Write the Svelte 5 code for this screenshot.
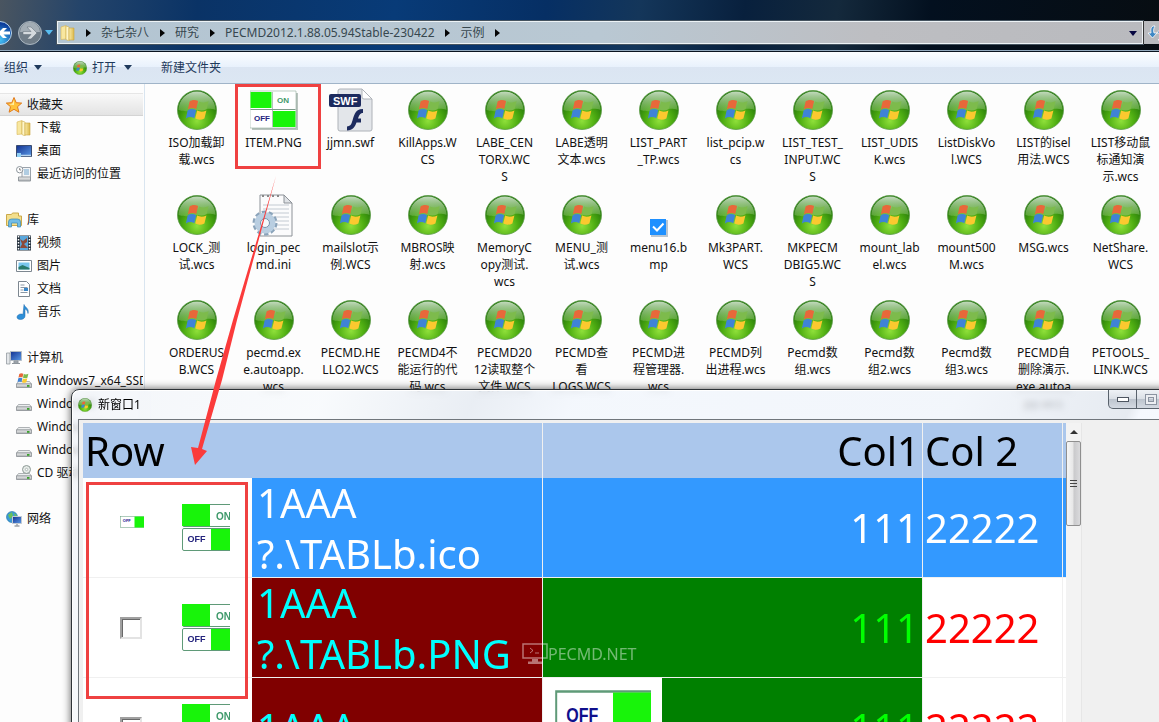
<script>
  const crumbs = ['杂七杂八', '研究', 'PECMD2012.1.88.05.94Stable-230422', '示例'];

  const groups = [
    {
      name: '收藏夹',
      icon: 'star',
      active: true,
      items: [
        { name: '下载', icon: 'folder' },
        { name: '桌面', icon: 'desktop' },
        { name: '最近访问的位置', icon: 'recent' },
      ],
    },
    {
      name: '库',
      icon: 'library',
      items: [
        { name: '视频', icon: 'video' },
        { name: '图片', icon: 'picture' },
        { name: '文档', icon: 'document' },
        { name: '音乐', icon: 'music' },
      ],
    },
    {
      name: '计算机',
      icon: 'computer',
      items: [
        { name: 'Windows7_x64_SSD', icon: 'system' },
        { name: 'Windows8', icon: 'drive' },
        { name: 'Windows10', icon: 'drive' },
        { name: 'Windows11', icon: 'drive' },
        { name: 'CD 驱动器', icon: 'cd' },
      ],
    },
    { name: '网络', icon: 'network', items: [] },
  ];

  // One entry per file, "|" marks a line break in the label.
  const files = [
    'ISO加载卸|载.wcs', 'ITEM.PNG', 'jjmn.swf', 'KillApps.W|CS', 'LABE_CEN|TORX.WC|S',
    'LABE透明|文本.wcs', 'LIST_PART|_TP.wcs', 'list_pcip.w|cs', 'LIST_TEST_|INPUT.WC|S',
    'LIST_UDIS|K.wcs', 'ListDiskVo|l.WCS', 'LIST的isel|用法.WCS', 'LIST移动鼠|标通知演|示.wcs',
    'LOCK_测|试.wcs', 'login_pec|md.ini', 'mailslot示|例.WCS', 'MBROS映|射.wcs', 'MemoryC|opy测试.|wcs',
    'MENU_测|试.wcs', 'menu16.b|mp', 'Mk3PART.|WCS', 'MKPECM|DBIG5.WC|S', 'mount_lab|el.wcs',
    'mount500|M.wcs', 'MSG.wcs', 'NetShare.|WCS',
    'ORDERUS|B.WCS', 'pecmd.ex|e.autoapp.|wcs', 'PECMD.HE|LLO2.WCS', 'PECMD4不|能运行的代|码.wcs',
    'PECMD20|12读取整个|文件.WCS', 'PECMD查|看|LOGS.WCS', 'PECMD进|程管理器.|wcs', 'PECMD列|出进程.wcs',
    'Pecmd数|组.wcs', 'Pecmd数|组2.wcs', 'Pecmd数|组3.wcs', 'PECMD自|删除演示.|exe.autoa|pp.wcs',
    'PETOOLS_|LINK.WCS',
  ].map((label) => ({
    label: label.split('|').join('\n'),
    kind: label.endsWith('.PNG') ? 'png'
      : label.endsWith('.swf') ? 'swf'
      : label.endsWith('.ini') ? 'ini'
      : label.startsWith('menu16') ? 'bmp'
      : 'wcs',
  }));

  const rows = [
    { text: '1AAA\n?.\\TABLb.ico', mini: true, tone: 'selected' },
    { text: '1AAA\n?.\\TABLb.PNG', tone: 'dark' },
    { text: '1AAA', tone: 'dark', preview: true },
  ];
</script>

<!-- shared gradients -->
<svg class="defs" aria-hidden="true">
  <defs>
    <radialGradient id="ball" cx="50%" cy="78%" r="66%">
      <stop offset="0" stop-color="#8fe03a" />
      <stop offset="0.5" stop-color="#4fae12" />
      <stop offset="1" stop-color="#1f7208" />
    </radialGradient>
    <linearGradient id="gloss" x1="0" y1="0" x2="0" y2="1">
      <stop offset="0" stop-color="#d5e6d2" stop-opacity="0.9" />
      <stop offset="1" stop-color="#9ccf7c" stop-opacity="0.35" />
    </linearGradient>
    <linearGradient id="gold" x1="0" y1="0" x2="1" y2="0">
      <stop offset="0" stop-color="#f9e9a4" />
      <stop offset="1" stop-color="#dcb94c" />
    </linearGradient>
    <linearGradient id="screen" x1="0" y1="0" x2="1" y2="1">
      <stop offset="0" stop-color="#12308f" />
      <stop offset="1" stop-color="#5b9be8" />
    </linearGradient>
    <linearGradient id="metal" x1="0" y1="0" x2="0" y2="1">
      <stop offset="0" stop-color="#f4f4f4" />
      <stop offset="1" stop-color="#a9adb0" />
    </linearGradient>
    <radialGradient id="blueball" cx="50%" cy="80%" r="70%">
      <stop offset="0" stop-color="#46c3f5" />
      <stop offset="1" stop-color="#0c3d9c" />
    </radialGradient>
  </defs>
</svg>

{#snippet flag()}
  <path d="M12 11.500c2.500-2 5.500-2 8.500-.5l-1.800 8c-2.700-1.500-5.700-1.500-8.400.3z" fill="#e8683a" />
  <path d="M21.500 11.500c3 1.500 6 1.300 9.500-.5l-2 8.200c-3.300 1.600-6.300 1.600-9.300.2z" fill="#7dbb4c" />
  <path d="M10 20.500c2.700-1.800 5.700-1.800 8.500-.3l-1.800 8c-2.800-1.500-5.700-1.500-8.400.3z" fill="#3f83d6" />
  <path d="M19.500 20.600c3 1.400 6 1.400 9.300-.2l-2 8c-3.300 1.700-6.200 1.700-9.100.2z" fill="#fbc92f" />
{/snippet}

{#snippet ball(size)}
  <svg width={size} height={size} viewBox="0 0 40 40" aria-hidden="true">
    <circle cx="20" cy="20" r="19.500" fill="url(#ball)" stroke="#5a9a46" stroke-width="0.800" />
    <path d="M1.500 20a18.500 18.500 0 0 1 37 0c-10-4-25 4-37 0z" fill="url(#gloss)" />
    <g transform="translate(.6 0)">{@render flag()}</g>
  </svg>
{/snippet}

{#snippet toggles(size)}
  <svg width={size} height={size} viewBox="0 0 48 48" aria-hidden="true">
    <rect x="0.500" y="0.500" width="56" height="22" rx="1.500" fill="#fff" stroke="#5f9a78" />
    <path d="M0 0h28v22H0z" fill="#18f40a" />
    <text x="34" y="15.500" class="on">ON</text>
    <rect x="0.500" y="24.500" width="56" height="22" rx="1.500" fill="#fff" stroke="#5f9a78" />
    <path d="M29 25h19v21H29z" fill="#18f40a" />
    <text x="5.500" y="38" class="off">OFF</text>
  </svg>
{/snippet}

{#snippet offSwitch(width, height)}
  <svg {width} {height} viewBox="0 0 24 12" preserveAspectRatio="none" aria-hidden="true">
    <rect x="0.300" y="0.300" width="24" height="11.400" fill="#fff" stroke="#5f9a78" stroke-width="0.500" />
    <path d="M14.500 .5H24v11h-9.500z" fill="#18f40a" />
    <text x="2.800" y="6.400" class="off-small">OFF</text>
  </svg>
{/snippet}

{#snippet fileIcon(kind)}
  {#if kind === 'wcs'}
    {@render ball(40)}
  {:else if kind === 'png'}
    <svg width="48" height="40" viewBox="0 0 48 40" aria-hidden="true">
      <path d="M2 3h46v37H2z" fill="#b9c4be" />
      <path d="M0 1h46v37H0z" fill="#fff" stroke="#7d9c8b" stroke-width="0.500" />
      <path d="M.5 2h21v16H.5zM23 21h22.500v16H23z" fill="#18f40a" />
      <path d="M.5 19.500h45" stroke="#7d9c8b" />
      <path d="M22.500 2v35" stroke="#7d9c8b" stroke-width="0.600" />
      <text x="27" y="13" class="on thumb">ON</text>
      <text x="4" y="31" class="off thumb">OFF</text>
    </svg>
  {:else if kind === 'swf'}
    <svg width="44" height="44" viewBox="0 0 44 44" aria-hidden="true">
      <path d="M11 1h22l10 10v30a2 2 0 0 1-2 2H11a2 2 0 0 1-2-2V3a2 2 0 0 1 2-2z" fill="#e3e6ea" stroke="#aeb2b8" />
      <path d="M33 1v8a2 2 0 0 0 2 2h8z" fill="#fff" stroke="#aeb2b8" />
      <rect x="0" y="6" width="32" height="13" rx="2" fill="#1d2b5e" />
      <text x="4" y="16.500" class="swf">SWF</text>
      <path d="M34 21c-9 0-9 8-11 13-1 3-2 4-5 4.500v4c6 0 8-4 9.500-8h4.500v-4h-3c1-3 2-5.500 5-5.500z" fill="#1d2b5e" />
    </svg>
  {:else if kind === 'ini'}
    <svg width="44" height="44" viewBox="0 0 44 44" aria-hidden="true">
      <path d="M8 2h24l8 8v33H8z" fill="#fbfbfc" stroke="#8d9298" />
      <path d="M32 2v8h8z" fill="#dfe2e6" stroke="#8d9298" />
      <path d="M10 3h20" stroke="#888" stroke-width="2" stroke-dasharray="2 3" />
      <path d="M11 12h26M11 16h26M11 20h26M11 24h26M11 28h26M11 32h26M11 36h26" stroke="#c3cad2" />
      <circle cx="13" cy="30" r="11" fill="none" stroke="#8aa3ba" stroke-width="3" stroke-dasharray="4.300 2.600" />
      <circle cx="13" cy="30" r="7.500" fill="none" stroke="#b9cee1" stroke-width="6" />
      <circle cx="13" cy="30" r="4.500" fill="#f4f8fb" stroke="#7591ac" />
    </svg>
  {:else}
    <svg width="18" height="18" viewBox="0 0 18 18" aria-hidden="true">
      <path d="M1 1h17v17H1z" fill="#b9c6d2" />
      <path d="M0 0h16v16H0z" fill="#1e90ff" />
      <path d="M3 7.500l4 4 6.500-7" fill="none" stroke="#fff" stroke-width="2" />
    </svg>
  {/if}
{/snippet}

{#snippet navIcon(kind)}
  <svg width="16" height="16" viewBox="0 0 16 16" aria-hidden="true">
    {#if kind === 'star'}
      <path d="M8 .5l2.200 5.200 5.500.4-4.200 3.600 1.400 5.500L8 12.300l-4.900 2.900 1.400-5.500L.3 6.100l5.500-.4z" fill="#ffc33a" stroke="#e07a1c" />
      <path d="M8 3v5L3 7.500l3.500-1z" fill="#fff0a8" />
    {:else if kind === 'folder'}
      <path d="M1 2l5-1.500V14l-5 .5z" fill="#f8e7a0" stroke="#d6b656" stroke-width="0.600" />
      <path d="M6 1l3 1v14l-3-1.500z" fill="#fff6ca" stroke="#cfae4c" stroke-width="0.600" />
      <path d="M9 3h5v12H9z" fill="url(#gold)" stroke="#c9a640" stroke-width="0.600" />
    {:else if kind === 'desktop'}
      <path d="M.5 2.500h15v11H.5z" fill="url(#screen)" stroke="#3a4c70" />
      <path d="M1 12.500h14" stroke="#b9d5ef" stroke-width="1.500" />
      <path d="M1 10h4v4H1z" fill="#8fd0f5" />
    {:else if kind === 'recent'}
      <path d="M6 1.500h8.500v10H6z" fill="#f3f5f7" stroke="#9aa2aa" />
      <path d="M8 4h5M8 6h5M8 8h5" stroke="#6fa4cc" />
      <path d="M2.500 11h12v4h-12z" fill="url(#metal)" stroke="#93999e" />
      <circle cx="3.700" cy="3.700" r="3.200" fill="#fff" stroke="#8d959c" />
      <path d="M3.700 2v2h1.500" fill="none" stroke="#555" stroke-width="0.700" />
    {:else if kind === 'library'}
      <path d="M.5 2.500h5l1-1.500h6v3h3v9.500H.5z" fill="#f3df8d" stroke="#cba94a" />
      <path d="M2.500 15V10a3 3 0 0 1 3-3h6a3 3 0 0 1 3 3v5h-3v-4h-6v4z" fill="#72bde6" stroke="#3b88b5" stroke-width="0.700" />
    {:else if kind === 'video'}
      <path d="M1 .5h14v15H1z" fill="#27333f" />
      <path d="M4 1h8v14H4z" fill="#5aa7dc" />
      <path d="M4 4l3 2 4-3v4l-3 2 4 4H4l2-4z" fill="#8d4a3a" />
      <path d="M2.500 1v14M13.500 1v14" stroke="#fff" stroke-width="1.500" stroke-dasharray="1.500 1.500" />
    {:else if kind === 'picture'}
      <path d="M.5 2.500h15v11H.5z" fill="#fff" stroke="#7d8790" />
      <path d="M2.500 4.500h11v7h-11z" fill="#79c6ee" />
      <path d="M2.500 9l4-2 7 3v1.500h-11z" fill="#287a6c" />
    {:else if kind === 'document'}
      <path d="M2.500.5h8l3 3v12h-11z" fill="#fff" stroke="#7d8790" />
      <path d="M4.500 4h4M4.500 6.500h7M4.500 9h3M4.500 11.500h7" stroke="#8b98a5" />
      <path d="M8 7h4v3H8z" fill="#3a87c9" />
    {:else if kind === 'music'}
      <path d="M8 .5c1 3 5.500 4 4 9-.5-3-1.500-4-3-4.500V12c0 2-2 3.500-4.500 3.500S1 14.500 1 13s2-3 4-3c1 0 1.700.2 2 .4z" fill="#2d8fd8" stroke="#1d66ab" stroke-width="0.500" />
    {:else if kind === 'computer'}
      <path d="M.5 3h3.500v11H.5z" fill="#e3e6e9" stroke="#888f96" stroke-width="0.700" />
      <path d="M4.500 1.500h11v9h-11z" fill="url(#screen)" stroke="#b5bcc4" />
      <path d="M8 11h4v2H8zM6 13.500h8" fill="#a9b0b8" stroke="#8d949b" />
    {:else if kind === 'system' || kind === 'drive' || kind === 'cd'}
      <path d="M2.500 8.500h11l2 2.500H.5z" fill="#eceeef" stroke="#8f9599" stroke-width="0.700" />
      <path d="M.5 11h15v3.500H.5z" fill="url(#metal)" stroke="#7f8589" stroke-width="0.700" />
      <path d="M11 12h2.500v1.800H11z" fill="#3aa02c" />
      {#if kind === 'system'}
        <g transform="translate(-2.500 -4.500) scale(.48)">{@render flag()}</g>
      {:else if kind === 'cd'}
        <circle cx="10.500" cy="4.500" r="4" fill="#e6ebe8" stroke="#8d9995" />
        <circle cx="10.500" cy="4.500" r="1.200" fill="#fff" stroke="#8d9995" stroke-width="0.600" />
      {/if}
    {:else}
      <circle cx="6" cy="6" r="5.500" fill="#3b9bd8" stroke="#1e6ea5" stroke-width="0.600" />
      <path d="M2 4l4-3 1 4-3 3zM8 2l3 2-2 2z" fill="#69c05a" />
      <path d="M6.500 5.500h9v7h-9z" fill="url(#screen)" stroke="#c3cad2" />
      <path d="M11 13v1.500M8.500 15h5" stroke="#6f7780" />
    {/if}
  </svg>
{/snippet}

<main class="desktop">
  <header class="titlebar">
    <button class="round back" aria-label="后退">
      <svg width="24" height="24" viewBox="0 0 24 24">
        <circle cx="12" cy="12" r="11.500" fill="url(#blueball)" stroke="#bcd4e6" />
        <path d="M10 12l5-5h4l-3.500 3.500H22v3h-6.500L19 17h-4z" fill="#fff" />
      </svg>
    </button>
    <button class="round" aria-label="前进">
      <svg width="24" height="24" viewBox="0 0 24 24">
        <circle cx="12" cy="12" r="11.500" fill="#707d88" stroke="#aab6c0" />
        <path d="M2 11a10 10 0 0 1 20 0z" fill="#a3adb5" />
        <path d="M19 12l-6 6h-4l4-4.500H5v-3h8L9 6h4z" fill="#d5dade" stroke="#5e6a74" stroke-width="0.500" />
      </svg>
    </button>
    <button class="history" aria-label="历史"><span class="down light"></span></button>
    <nav class="address" aria-label="地址">
      {@render navIcon('folder')}
      <span class="sep"></span>
      {#each crumbs as crumb}
        <a href="#{crumb}">{crumb}</a>
        <span class="sep"></span>
      {/each}
      <button class="drop" aria-label="展开"><span class="down navy"></span></button>
    </nav>
    <button class="refresh" aria-label="刷新">
      <svg width="18" height="16" viewBox="0 0 18 16">
        <path d="M6 1C3 3 4 6 4 8H1l4.500 5L10 8H7c-1-3 0-5 1-7z" fill="#3f88c4" stroke="#fff" stroke-width="0.800" />
        <path d="M11 15c3-2 2-5 2-7h-3l4-5 4 5v7z" fill="#2c6fb0" stroke="#fff" stroke-width="0.800" />
      </svg>
    </button>
  </header>

  <div class="toolbar">
    <button>组织 <span class="down"></span></button>
    <button class="open">{@render ball(14)}打开 <span class="down"></span></button>
    <button class="new">新建文件夹</button>
  </div>

  <div class="content">
    <aside class="sidebar">
      {#each groups as group}
        <section>
          <a class="entry head" class:active={group.active} href="#{group.name}">{@render navIcon(group.icon)}{group.name}</a>
          {#each group.items as item}
            <a class="entry" href="#{item.name}">{@render navIcon(item.icon)}{item.name}</a>
          {/each}
        </section>
      {/each}
    </aside>

    <ul class="files">
      {#each files as file}
        <li>
          <span class="icon" data-kind={file.kind}>{@render fileIcon(file.kind)}</span>
          <span class="label">{file.label}</span>
        </li>
      {/each}
    </ul>
  </div>

  <section class="window" aria-label="新窗口1">
    <div class="caption">
      {@render ball(14)}
      <span>新窗口1</span>
      <div class="controls">
        <button aria-label="最小化"><i class="min"></i></button>
        <button aria-label="最大化"><i class="max"></i></button>
      </div>
    </div>
    <div class="client">
      <table>
        <colgroup>
          <col class="c0" /><col class="c1" /><col class="c2" /><col class="c3" />
        </colgroup>
        <thead>
          <tr><th>Row</th><th class="num">Col1</th><th>Col 2</th><th></th></tr>
        </thead>
        <tbody>
          {#each rows as row}
            <tr data-tone={row.tone}>
              <td>
                <div class="cell">
                  <div class="state">
                    <label class="tick">
                      <input type="checkbox" class:mini={row.mini} aria-label="选择" />
                      {#if row.mini}{@render offSwitch(24, 12)}{/if}
                    </label>
                    {@render toggles(48)}
                  </div>
                  <div class="name">{row.text}</div>
                </div>
              </td>
              <td class="first">
                <div class="cell num">
                  {#if row.preview}
                    <span class="preview">{@render offSwitch(96, 60)}</span>
                  {/if}
                  111
                </div>
              </td>
              <td class="second"><div class="cell">22222</div></td>
              <td class="tail"></td>
            </tr>
          {/each}
        </tbody>
      </table>
      <div class="scroll">
        <button class="up" aria-label="向上滚动"><span></span></button>
        <div class="thumb-bar"><i></i><i></i><i></i></div>
      </div>
    </div>
  </section>

  <div class="mark file-mark"></div>
  <div class="mark cell-mark"></div>
  <svg class="arrow" width="90" height="292" viewBox="0 0 90 292" aria-hidden="true">
    <path d="M86 0L43 144 26 204 8 272l-7-1 4 18 12-14-5-2L32 204 47 144z" fill="#fb3b3b" />
  </svg>

  <div class="watermark">
    <svg width="26" height="22" viewBox="0 0 26 22" aria-hidden="true">
      <path d="M1 1h24v14H1z" fill="none" stroke="currentColor" stroke-width="1.500" />
      <path d="M10 16h6v2.500h4V21H6v-2.500h4z" fill="currentColor" />
      <path d="M8 5l3 2.500L8 10M13 10h4" fill="none" stroke="currentColor" />
    </svg>
    <span>PECMD.NET</span>
  </div>
</main>

<style>
  :global(body) {
    margin: 0;
  }

  .desktop {
    position: relative;
    display: flex;
    flex-direction: column;
    height: 100vh;
    overflow: hidden;
    background: #fdfdfd;
    color: #111;
    font: 12px/17px 'Noto Sans', 'Noto Sans CJK SC', sans-serif;
  }
  .defs {
    position: absolute;
    width: 0;
    height: 0;
  }
  button {
    padding: 0;
    border: 0;
    background: none;
    color: inherit;
    font: inherit;
  }
  a {
    color: inherit;
    text-decoration: none;
  }
  svg {
    flex: none;
    display: block;
  }
  svg text {
    font-family: 'Liberation Sans', sans-serif;
    font-weight: 700;
  }
  .on { font-size: 10px; fill: #3f9a6b; }
  .off { font-size: 9px; fill: #24247e; }
  .on.thumb, .off.thumb { font-size: 8px; }
  .off-small { font-size: 4px; fill: #10108c; }
  .swf { font-size: 11px; fill: #fff; }

  /* title bar */
  .titlebar {
    display: flex;
    align-items: center;
    box-sizing: border-box;
    height: 52px;
    padding: 20px 0 6px;
    border-bottom: 1px solid #0a1420;
    box-shadow: inset 0 -1px #93a9bd;
    background: linear-gradient(97deg, #4a5560 0, #24446a 7%, #0a3366 17%, #083b78 34%, #062f64 47%, #14365a 55%, #08203d 64%, #14293c 72%, #03101f 80%, #070d12 100%);
  }
  .round {
    width: 24px;
    height: 24px;
    margin-right: 6px;
  }
  .back {
    margin-left: -12px;
  }
  .history {
    width: 14px;
    display: grid;
    place-items: center;
    margin-left: -6px;
  }
  .down {
    display: inline-block;
    border: 4px solid transparent;
    border-top: 5px solid #1e395b;
    border-bottom: 0;
    margin-left: 3px;
  }
  .down.light { border-top-color: #58bdf0; margin: 0; }
  .down.navy { border-top-color: #060640; margin: 0; vertical-align: middle; }
  .address {
    flex: 1;
    display: flex;
    align-items: center;
    box-sizing: border-box;
    height: 23px;
    margin-left: 1px;
    padding-left: 2px;
    border: 1px solid #edf3f6;
    outline: 1px solid #45535f;
    background: linear-gradient(90deg, #b3c5d2, #b9c8d3 50%, #bdbec2 75%, #b9babe);
    color: #37474f;
  }
  .address a {
    padding: 0 1px;
  }
  .sep {
    width: 24px;
    display: grid;
    place-items: center;
  }
  .sep::before {
    content: '';
    border: 4px solid transparent;
    border-left: 5px solid #050505;
    border-right: 0;
  }
  .drop {
    width: 19px;
    margin-left: auto;
  }
  .refresh {
    width: 16px;
    height: 23px;
    padding-left: 3px;
    overflow: hidden;
    border-left: 1px solid #333;
    background: #b9babe;
  }

  .toolbar {
    display: flex;
    align-items: center;
    box-sizing: border-box;
    height: 32px;
    padding-left: 4px;
    border-bottom: 1px solid #a0b4c8;
    background: linear-gradient(#fbfdff, #e8f1fc 49%, #dbe5f2 50%, #dce7f3);
    color: #1e395b;
  }
  .toolbar button {
    display: flex;
    align-items: center;
    gap: 3px;
  }
  .toolbar .open { margin-left: 31px; gap: 5px; }
  .toolbar .new { margin-left: 29px; }

  /* explorer body */
  .content {
    flex: 1;
    display: flex;
    min-height: 0;
  }
  .sidebar {
    flex: none;
    box-sizing: border-box;
    width: 145px;
    padding-top: 9px;
    border-right: 1px solid #d9e5f0;
    overflow: hidden;
  }
  .sidebar section {
    margin-bottom: 23px;
  }
  .entry {
    display: flex;
    align-items: center;
    gap: 5px;
    height: 23px;
    margin-right: 1px;
    padding-left: 16px;
    overflow: hidden;
    white-space: nowrap;
  }
  .entry.head { padding-left: 6px; }
  .entry.active {
    background: linear-gradient(#fafafa, #e2e2e2);
    box-shadow: inset 0 1px #e6e6e6, inset 0 -1px #d4d4d4;
  }
  .files {
    flex: 1;
    display: grid;
    grid-template-columns: repeat(auto-fill, 77px);
    grid-auto-rows: 105px;
    align-content: start;
    margin: 0;
    padding: 4px 0 0 13px;
    list-style: none;
  }
  .files li {
    display: flex;
    flex-direction: column;
    align-items: center;
  }
  .icon {
    flex: none;
    display: flex;
    align-items: center;
    justify-content: center;
    height: 44px;
    margin-bottom: 2px;
  }
  .icon[data-kind='bmp'] {
    align-items: end;
  }
  .label {
    white-space: pre;
    text-align: center;
  }

  /* floating window */
  .window {
    position: absolute;
    top: 389px;
    left: 71px;
    right: -20px;
    bottom: -20px;
    display: flex;
    flex-direction: column;
    padding-left: 6px;
    border: 1px solid #2e3338;
    border-radius: 8px 8px 0 0;
    box-shadow: 0 0 9px rgb(0 0 0 / 0.65), inset 1px 1px #fff;
    background: linear-gradient(115deg, rgb(240 243 248 / 0.75) 0, rgb(246 249 252 / 0.75) 20%, rgb(226 232 240 / 0.75) 32%, rgb(240 245 252 / 0.75) 40%, rgb(238 243 250 / 0.75) 70%, rgb(222 228 236 / 0.75) 84%, rgb(242 246 254 / 0.75) 85%);
    backdrop-filter: blur(3px);
  }
  .caption {
    display: flex;
    align-items: center;
    gap: 6px;
    height: 29px;
    color: #000;
  }
  .controls {
    display: flex;
    align-self: start;
    margin-left: auto;
    padding-right: 13px;
  }
  .controls button {
    display: grid;
    place-items: center;
    box-sizing: border-box;
    width: 29px;
    height: 19px;
    border: 1px solid #59626c;
    border-top: 0;
    border-radius: 0 0 0 5px;
    background: linear-gradient(#eff2f6, #dbe0e6 48%, #bcc3cd 50%, #d4dae2);
  }
  .controls button + button {
    margin-left: -1px;
    border-radius: 0;
  }
  .min {
    width: 10px;
    height: 3px;
    border: 1px solid #4d5560;
    background: #fff;
  }
  .max {
    width: 4px;
    height: 3px;
    border: 1px solid #8b93a0;
    outline: 2px solid #eceef2;
    box-shadow: 0 0 0 3px #8b93a0;
  }
  .client {
    flex: 1;
    display: flex;
    align-items: stretch;
    min-height: 0;
    padding: 3px 0 0 4px;
    border: 1px solid #70767c;
    background: #f0f0f0;
  }
  table {
    flex: none;
    align-self: start;
    width: 983px;
    border-spacing: 0;
    table-layout: fixed;
    background: #fff;
    font-size: 40px;
    line-height: 51px;
  }
  .c0 { width: 460px; }
  .c1 { width: 380px; }
  .c2 { width: 140px; }
  th,
  td {
    padding: 0;
    border-right: 1px solid #f0f0f0;
  }
  th:last-child,
  td:last-child {
    border-right: 0;
  }
  th {
    height: 55px;
    padding: 0 2px;
    background: #abc7ec;
    color: #000;
    font-weight: 400;
    text-align: left;
    box-sizing: border-box;
  }
  th.num {
    text-align: right;
  }
  td {
    border-bottom: 1px solid #f0f0f0;
  }
  .cell {
    display: flex;
    align-items: center;
    height: 99px;
    padding-left: 2px;
  }
  .cell.num {
    justify-content: flex-end;
    padding: 0 3px 0 0;
  }
  td:first-child .cell { padding-left: 0; }
  .state {
    flex: none;
    display: flex;
    align-items: center;
    gap: 38px;
    box-sizing: border-box;
    width: 169px;
    height: 100%;
    padding-left: 37px;
    background: #fff;
  }
  .tick {
    display: flex;
    width: 24px;
    margin-bottom: 12px;
  }
  .tick input {
    appearance: none;
    box-sizing: border-box;
    width: 22px;
    height: 22px;
    margin: 12px 0 0;
    border: 2px solid #a0a0a0;
    border-right-color: #e3e3e3;
    border-bottom-color: #e3e3e3;
    box-shadow: inset 1px 1px #696969;
    background: #fff;
  }
  .tick input.mini {
    width: 0;
    height: 0;
    margin: 0;
    border: 0;
  }
  .name {
    flex: 1;
    display: flex;
    align-items: center;
    height: 100%;
    padding-left: 5px;
    white-space: pre;
  }
  [data-tone='selected'] {
    background: #3399ff;
    color: #fff;
  }
  [data-tone='dark'] .name { background: #800000; color: #00ffff; }
  [data-tone='dark'] .first { background: #008000; color: #00ff00; }
  [data-tone='dark'] .second,
  [data-tone='dark'] .tail { background: #fff; color: #f00; }
  .preview {
    box-sizing: border-box;
    width: 119px;
    height: 99px;
    margin-right: auto;
    padding: 12px;
    background: #fff;
  }

  .scroll {
    width: 15px;
    border-right: 1px solid #e6e6e6;
    background: #f3f3f3;
  }
  .up {
    display: grid;
    place-items: center;
    width: 15px;
    height: 18px;
  }
  .up span {
    border: 4px solid transparent;
    border-bottom: 4px solid #333;
    border-top: 0;
  }
  .thumb-bar {
    display: flex;
    flex-direction: column;
    align-items: center;
    justify-content: center;
    gap: 2px;
    box-sizing: border-box;
    width: 15px;
    height: 85px;
    border: 1px solid #8f8f8f;
    border-radius: 2px;
    background: linear-gradient(90deg, #f6f6f6, #e6e6e6 48%, #c9c9cb 52%, #dadadc);
  }
  .thumb-bar i {
    width: 7px;
    height: 1px;
    background: #444;
  }

  /* annotations drawn over both windows */
  .mark {
    position: absolute;
    box-sizing: border-box;
    border: 3px solid #ef4141;
    pointer-events: none;
  }
  .file-mark { left: 235px; top: 84px; width: 86px; height: 85px; }
  .cell-mark { left: 86px; top: 482px; width: 162px; height: 217px; }
  .arrow {
    position: absolute;
    left: 190px;
    top: 176px;
    pointer-events: none;
  }
  .watermark {
    position: absolute;
    left: 522px;
    top: 643px;
    display: flex;
    align-items: center;
    color: rgb(255 255 255 / 0.45);
    font-size: 16px;
    line-height: 22px;
    pointer-events: none;
  }
</style>
